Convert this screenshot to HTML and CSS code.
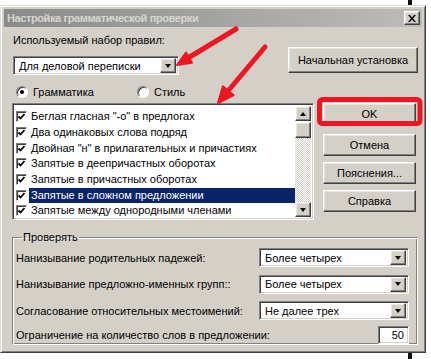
FILE: index.html
```html
<!DOCTYPE html>
<html lang="ru">
<head>
    <meta charset="UTF-8">
    <title>Настройка грамматической проверки</title>
    <link rel="stylesheet" href="styles.css">
</head>
<body>
    <div class="window">
        <div class="titlebar">
            <span class="title">Настройка грамматической проверки</span>
            <span class="close raised">
                <svg width="8" height="7" viewBox="0 0 8 7"><path d="M0 0h2l2 2.5L6 0h2L5 3.5 8 7H6L4 4.5 2 7H0l3-3.5z" fill="#000"/></svg>
            </span>
        </div>

        <div class="content">
            <div class="top-row">
                <div class="ruleset">
                    <div class="label">Используемый набор правил:</div>
                    <div class="combo sunken ruleset-combo">
                        <span class="value">Для деловой переписки</span>
                        <span class="drop raised"><i class="tri"></i></span>
                    </div>
                </div>
                <div class="btn raised reset">Начальная установка</div>
            </div>

            <div class="radios">
                <span class="radio-item"><span class="radio checked"></span>Грамматика</span>
                <span class="radio-item style"><span class="radio"></span>Стиль</span>
            </div>

            <div class="main-row">
                <div class="listbox sunken">
                    <ul class="items">
                        <li><span class="check"></span><span class="text">Беглая гласная "-о" в предлогах</span></li>
                        <li><span class="check"></span><span class="text">Два одинаковых слова подряд</span></li>
                        <li><span class="check"></span><span class="text">Двойная "н" в прилагательных и причастиях</span></li>
                        <li><span class="check"></span><span class="text">Запятые в деепричастных оборотах</span></li>
                        <li><span class="check"></span><span class="text">Запятые в причастных оборотах</span></li>
                        <li class="selected"><span class="check"></span><span class="text">Запятые в сложном предложении</span></li>
                        <li><span class="check"></span><span class="text">Запятые между однородными членами</span></li>
                    </ul>
                    <div class="scrollbar">
                        <span class="sb-btn raised"><i class="tri up"></i></span>
                        <span class="sb-thumb raised"></span>
                        <span class="sb-track"></span>
                        <span class="sb-btn raised"><i class="tri"></i></span>
                    </div>
                </div>
                <div class="actions">
                    <div class="btn raised ok">OK</div>
                    <div class="btn raised cancel">Отмена</div>
                    <div class="btn raised explain">Пояснения...</div>
                    <div class="btn raised help">Справка</div>
                </div>
            </div>

            <fieldset class="group">
                <legend>Проверять</legend>
                <div class="opt-row">
                    <span>Нанизывание родительных падежей:</span>
                    <div class="combo sunken opt-combo">
                        <span class="value">Более четырех</span>
                        <span class="drop raised"><i class="tri"></i></span>
                    </div>
                </div>
                <div class="opt-row">
                    <span>Нанизывание предложно-именных групп::</span>
                    <div class="combo sunken opt-combo">
                        <span class="value">Более четырех</span>
                        <span class="drop raised"><i class="tri"></i></span>
                    </div>
                </div>
                <div class="opt-row">
                    <span>Согласование относительных местоимений:</span>
                    <div class="combo sunken opt-combo">
                        <span class="value">Не далее трех</span>
                        <span class="drop raised"><i class="tri"></i></span>
                    </div>
                </div>
                <div class="opt-row last">
                    <span>Ограничение на количество слов в предложении:</span>
                    <div class="num sunken">50</div>
                </div>
            </fieldset>
        </div>
    </div>

    <!-- red marks drawn over the screenshot -->
    <svg class="marks" width="431" height="359" viewBox="0 0 431 359">
        <g fill="#ee1620" stroke="#ee1620" stroke-linecap="round">
            <line x1="236" y1="29" x2="188" y2="58" stroke-width="5"/>
            <polygon points="177,65 186,52.6 192,62.8" stroke-width="2" stroke-linejoin="round"/>
            <line x1="265" y1="47" x2="228" y2="91" stroke-width="5"/>
            <polygon points="218,103 222.9,86.2 233.7,95.2" stroke-width="2" stroke-linejoin="round"/>
        </g>
        <rect x="319.5" y="99.5" width="100.5" height="24" rx="3" fill="none" stroke="#ee1620" stroke-width="5"/>
    </svg>
</body>
</html>
```

FILE: styles.css
```css
* {
    margin: 0;
    padding: 0;
    box-sizing: border-box;
}

body {
    width: 431px;
    height: 359px;
    position: relative;
    overflow: hidden;
    font-family: 'Liberation Sans', Arial, sans-serif;
    font-size: 11px;
    color: #000;
    background: linear-gradient(90deg, transparent 408px, #111 408px, #111 412px, transparent 412px), #fff;
}

/* classic 3d borders */
.raised {
    background: #d4d0c8;
    border: 1px solid;
    border-color: #fff #404040 #404040 #fff;
    box-shadow: inset -1px -1px #808080, inset 1px 1px #e8e6e0;
}

.sunken {
    background: #fff;
    border: 1px solid;
    border-color: #808080 #fff #fff #808080;
    box-shadow: inset 1px 1px #404040, inset -1px -1px #d4d0c8;
}

.window {
    margin-top: 5px;
    width: 426px;
    height: 348px;
    padding: 3px;
    background: #d4d0c8;
    border: 1px solid;
    border-color: #e0ded8 #404040 #404040 #e0ded8;
    box-shadow: inset 1px 1px #fff, inset -1px -1px #808080;
}

.titlebar {
    height: 18px;
    display: flex;
    align-items: center;
    justify-content: space-between;
    padding: 0 2px 0 3px;
    background: linear-gradient(90deg, #8a8a8a, #bdbcba);
}

.title {
    color: #d8d6d0;
    font-weight: bold;
    font-size: 11px;
    letter-spacing: -0.4px;
}

.close {
    width: 16px;
    height: 14px;
    display: flex;
    align-items: center;
    justify-content: center;
}

.content {
    padding: 6px 0 0 8px;
}

.top-row {
    display: flex;
    justify-content: space-between;
    align-items: flex-start;
}

.label {
    line-height: 14px;
    padding-left: 1px;
}

.combo {
    height: 19px;
    display: flex;
    align-items: center;
    justify-content: space-between;
    padding: 2px;
}

.combo .value {
    padding-left: 3px;
}

.ruleset-combo {
    width: 166px;
    margin-top: 9px;
    margin-left: 1px;
}

.drop {
    width: 16px;
    height: 15px;
    display: flex;
    align-items: center;
    justify-content: center;
}

.tri {
    width: 0;
    height: 0;
    border-left: 3.5px solid transparent;
    border-right: 3.5px solid transparent;
    border-top: 4px solid #000;
}

.tri.up {
    border-top: 0;
    border-bottom: 4px solid #000;
}

.btn {
    display: flex;
    align-items: center;
    justify-content: center;
}

.reset {
    width: 130px;
    height: 26px;
    margin: 14px 4px 0 0;
}

.radios {
    display: flex;
    height: 14px;
    margin-top: 10px;
    padding-left: 4px;
    align-items: center;
}

.radio-item {
    display: flex;
    align-items: center;
    gap: 5px;
}

.radio-item.style {
    margin-left: 43px;
}

.radio {
    width: 12px;
    height: 12px;
    border-radius: 50%;
    background: #fff;
    border: 1px solid;
    border-color: #808080 #fff #fff #808080;
    box-shadow: inset 1px 1px #404040;
    position: relative;
}

.radio.checked::after {
    content: '';
    position: absolute;
    left: 3px;
    top: 3px;
    width: 4px;
    height: 4px;
    border-radius: 50%;
    background: #000;
}

.main-row {
    display: flex;
    align-items: flex-start;
    margin-top: 4px;
}

.listbox {
    width: 302px;
    height: 117px;
    display: flex;
    padding: 2px;
}

.items {
    list-style: none;
    flex: 1;
    padding-top: 3px;
}

.items li {
    height: 15.7px;
    display: flex;
    align-items: center;
    padding-left: 1px;
}

.check {
    width: 11px;
    height: 11px;
    flex: none;
    border: 1px solid;
    border-color: #808080 #fff #fff #808080;
    box-shadow: inset 1px 1px #404040;
    background: #fff url("data:image/svg+xml,%3Csvg xmlns='http://www.w3.org/2000/svg' width='9' height='9'%3E%3Cpath d='M1.5 4.5l2 2 4-4.5' fill='none' stroke='%23000' stroke-width='1.8'/%3E%3C/svg%3E") no-repeat 0 0;
}

.items .text {
    margin-left: 2px;
    padding: 0 2px;
    line-height: 15px;
    flex: 1;
}

.items li.selected .text {
    background: #0a246a;
    color: #fff;
}

.scrollbar {
    width: 16px;
    display: flex;
    flex-direction: column;
}

.sb-btn {
    height: 15px;
    display: flex;
    align-items: center;
    justify-content: center;
}

.sb-thumb {
    height: 16px;
    margin-top: 1px;
}

.sb-track {
    flex: 1;
    background: repeating-conic-gradient(#fff 0 25%, #d4d0c8 0 50%) 0 0 / 2px 2px;
}

.actions {
    width: 93px;
    margin-left: 9px;
    display: flex;
    flex-direction: column;
}

.actions .btn {
    height: 22px;
}

.actions .cancel {
    margin-top: 9px;
}

.actions .explain,
.actions .help {
    margin-top: 6px;
}

.group {
    width: 406px;
    margin-top: 10px;
    border: 1px solid;
    border-color: #808080 #fff #fff #808080;
    box-shadow: inset 1px 1px #fff, inset -1px -1px #808080;
    padding: 4px 8px 0 3px;
    height: 115px;
}

.group legend {
    margin-left: 6px;
    padding: 0 1px;
    line-height: 14px;
}

.opt-row {
    height: 19px;
    display: flex;
    align-items: center;
    justify-content: space-between;
    white-space: nowrap;
    margin-bottom: 7.5px;
}

.opt-row.last {
    margin-top: -2px;
}

.opt-combo {
    width: 150px;
}

.num {
    width: 31px;
    height: 18px;
    text-align: right;
    padding: 2px 4px 0 0;
}

.marks {
    position: absolute;
    top: 0;
    left: 0;
    pointer-events: none;
}
```
